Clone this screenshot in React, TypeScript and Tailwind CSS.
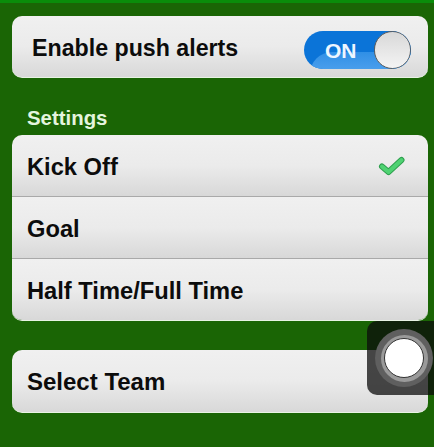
const rowBg = 'bg-gradient-to-b from-[#f0f0f0] via-[#ebebeb] to-[#d8d8d8]';

const settings = [
  { id: 'kickoff', label: 'Kick Off', checked: true, height: 'h-[61px]' },
  { id: 'goal', label: 'Goal', checked: false, height: 'h-[62px]' },
  { id: 'half', label: 'Half Time/Full Time', checked: false, height: 'h-[62px]' },
];

function Check() {
  return (
    <svg width="28" height="24" viewBox="0 0 28 24" fill="none">
      <path d="M4 12.5 L10.5 18 L23.5 6" stroke="#2fa04f" strokeWidth="6" strokeLinecap="round" strokeLinejoin="round" />
      <path d="M4 12.5 L10.5 18 L23.5 6" stroke="#4fd272" strokeWidth="4" strokeLinecap="round" strokeLinejoin="round" />
    </svg>
  );
}

function Toggle() {
  return (
    <div className="relative w-[107px] h-[38px] rounded-full overflow-hidden bg-[#0b74d8]">
      {/* gloss on the lower half */}
      <div className="absolute left-[6px] top-[21px] w-[110px] h-[30px] rounded-tl-[22px] bg-gradient-to-b from-[#2f8fe6] to-[#5aa9f0]" />
      <span className="absolute left-[21px] top-[8px] text-[21px] leading-6 font-bold text-[#eef6ff]">ON</span>
      <div className="absolute right-0 top-0 w-[37px] h-[38px] rounded-full border border-[#5d5d5d] bg-gradient-to-b from-[#d8d8d8] to-[#f4f4f4]" />
    </div>
  );
}

export default function App() {
  return (
    <div
      className="relative w-[434px] h-[447px] overflow-hidden bg-[#1a6505] border-t-[3px] border-[#0a8c0a] pl-3 pr-[6px] pt-[13px]"
      style={{ fontFamily: '"Liberation Sans", Arial, sans-serif' }}
    >
      {/* Push alerts */}
      <div className={`flex items-center justify-between h-[62px] pl-5 pr-[17px] rounded-[10px] border-b border-[#e8f3e4] ${rowBg}`}>
        <span className="pt-[3px] text-[23.2px] font-bold text-[#0c0c0c]">Enable push alerts</span>
        <div className="pt-[7px]">
          <Toggle />
        </div>
      </div>

      <div className="mt-[28px] h-[29px] pl-[15px] text-[20.4px] leading-[24px] font-bold text-[#e4f5de]">Settings</div>

      {/* Settings */}
      <div className="rounded-[10px] overflow-hidden border-b border-[#e8f3e4]">
        {settings.map((item, i) => (
          <div
            key={item.id}
            className={`flex items-center justify-between pl-[15px] pr-[22px] ${item.height} ${rowBg} ${i > 0 ? 'border-t border-[#a9a9a9]' : ''}`}
          >
            <span className="pt-[4px] text-[23.7px] font-bold text-[#0c0c0c]">{item.label}</span>
            {item.checked && <Check />}
          </div>
        ))}
      </div>

      {/* Select team */}
      <div className={`mt-[29px] flex items-center h-[63px] pl-[15px] rounded-[10px] border-b border-[#e8f3e4] ${rowBg}`}>
        <span className="pt-[2px] text-[24px] font-bold text-[#0c0c0c]">Select Team</span>
      </div>

      {/* Floating touch button */}
      <div className="absolute left-[367px] top-[318px] w-[80px] h-[74px] rounded-[10px] bg-[#0c0c0c]/75 flex items-center pl-[8px]">
        <div className="w-[58px] h-[58px] rounded-full bg-[#5f5f5f] flex items-center justify-center">
          <div className="w-[47px] h-[47px] rounded-full bg-[#9a9a9a] flex items-center justify-center">
            <div className="w-[40px] h-[40px] rounded-full bg-white border border-[#333333]" />
          </div>
        </div>
      </div>
    </div>
  );
}
